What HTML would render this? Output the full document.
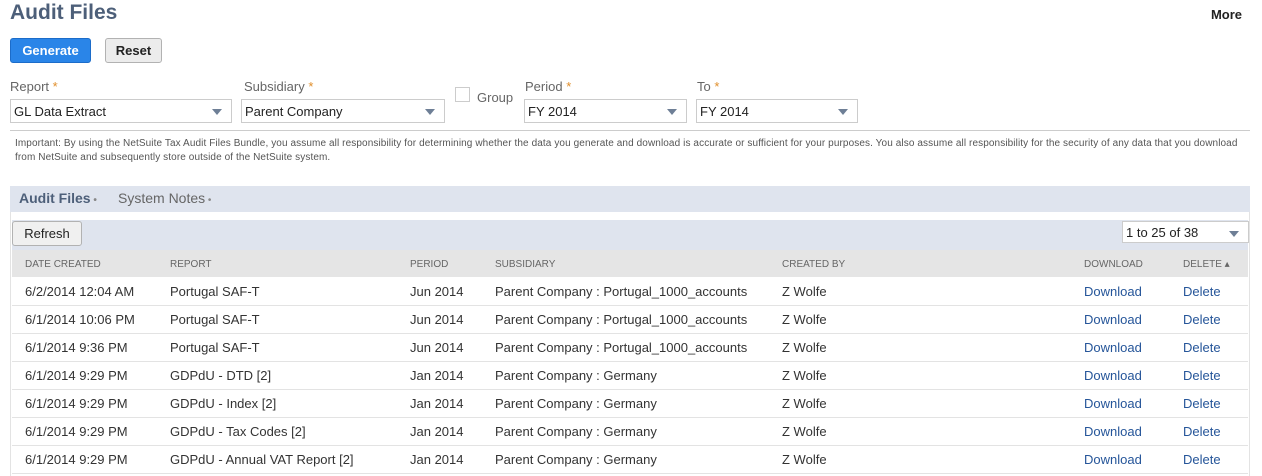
<!DOCTYPE html>
<html><head><style>
*{box-sizing:border-box;margin:0;padding:0}
body{width:1262px;height:475px;overflow:hidden;background:#fff;font-family:"Liberation Sans",Arial,sans-serif;color:#333;position:relative}
.a{position:absolute}
h1{position:absolute;left:10px;top:1px;font-size:21px;font-weight:bold;color:#4d5f79}
.more{right:20px;top:7px;font-size:13px;font-weight:bold;color:#222}
.btn{position:absolute;height:25px;border-radius:3px;font-size:13px;font-weight:bold;text-align:center;line-height:23px}
.gen{left:10px;top:38px;width:81px;background:#2a85e8;border:1px solid #1c6cc9;color:#fff}
.res{left:105px;top:38px;width:57px;background:#ececec;border:1px solid #b2b2b2;color:#222}
.lbl{font-size:13px;color:#666;top:79px}
.lbl b{color:#e08e2b;font-weight:normal}
.sel{position:absolute;top:99px;height:24px;border:1px solid #ccc;font-size:13px;color:#222;padding:4px 0 0 3px}
.sel:after{content:"";position:absolute;right:9px;top:9px;border-left:5px solid transparent;border-right:5px solid transparent;border-top:6px solid #6e7f96}
.imp{left:15px;top:137px;width:1225px;font-size:10px;letter-spacing:0.1px;line-height:14px;color:#555}
table{position:absolute;left:12px;top:250px;width:1236px;border-collapse:collapse;font-size:13px;table-layout:fixed}
th{height:27px;background:#e5e5e5;font-size:10px;font-weight:normal;color:#666;text-align:left;padding-top:2px}
td{height:28px;border-bottom:1px solid #e3e3e3;color:#333;padding-top:1px}
th:first-child,td:first-child{padding-left:13px}
td.l{color:#255599}
</style></head><body>
<h1>Audit Files</h1>
<div class="a more">More</div>
<div class="btn gen">Generate</div>
<div class="btn res">Reset</div>
<div class="a lbl" style="left:10px">Report <b>*</b></div>
<div class="a lbl" style="left:244px">Subsidiary <b>*</b></div>
<div class="a lbl" style="left:525px">Period <b>*</b></div>
<div class="a lbl" style="left:697px">To <b>*</b></div>
<div class="sel" style="left:10px;width:222px">GL Data Extract</div>
<div class="sel" style="left:241px;width:204px">Parent Company</div>
<div class="a" style="left:455px;top:87px;width:15px;height:15px;border:1px solid #ccc"></div>
<div class="a" style="left:477px;top:90px;font-size:13px;color:#666">Group</div>
<div class="sel" style="left:524px;width:163px">FY 2014</div>
<div class="sel" style="left:696px;width:162px">FY 2014</div>
<div class="a" style="left:10px;top:130px;width:1240px;height:1px;background:#ccc"></div>
<div class="a imp">Important: By using the NetSuite Tax Audit Files Bundle, you assume all responsibility for determining whether the data you generate and download is accurate or sufficient for your purposes. You also assume all responsibility for the security of any data that you download from NetSuite and subsequently store outside of the NetSuite system.</div>
<div class="a" style="left:10px;top:186px;width:1240px;height:26px;background:#dfe4ee"></div>
<div class="a" style="left:19px;top:190px;font-size:14px;font-weight:bold;color:#4d5f79">Audit Files<span style="font-size:10px;color:#888"> •</span></div>
<div class="a" style="left:118px;top:190px;font-size:14px;color:#666">System Notes<span style="font-size:10px;color:#888"> •</span></div>
<div class="a" style="left:10px;top:212px;width:1240px;height:264px;border-left:1px solid #e3e3e3;border-right:1px solid #e3e3e3"></div>
<div class="a" style="left:12px;top:220px;width:1236px;height:30px;background:#dfe4ee"></div>
<div class="btn" style="left:12px;top:221px;width:70px;background:#f0f0f0;border:1px solid #b2b2b2;font-weight:normal;color:#222">Refresh</div>
<div class="sel" style="left:1122px;top:221px;width:127px;height:22px;padding-top:3px;background:#fff">1 to 25 of 38</div>
<table>
<colgroup><col style="width:158px"><col style="width:240px"><col style="width:85px"><col style="width:287px"><col style="width:302px"><col style="width:99px"><col></colgroup>
<tr><th>DATE CREATED</th><th>REPORT</th><th>PERIOD</th><th>SUBSIDIARY</th><th>CREATED BY</th><th>DOWNLOAD</th><th>DELETE ▴</th></tr>
<tr><td>6/2/2014 12:04 AM</td><td>Portugal SAF-T</td><td>Jun 2014</td><td>Parent Company : Portugal_1000_accounts</td><td>Z Wolfe</td><td class="l">Download</td><td class="l">Delete</td></tr>
<tr><td>6/1/2014 10:06 PM</td><td>Portugal SAF-T</td><td>Jun 2014</td><td>Parent Company : Portugal_1000_accounts</td><td>Z Wolfe</td><td class="l">Download</td><td class="l">Delete</td></tr>
<tr><td>6/1/2014 9:36 PM</td><td>Portugal SAF-T</td><td>Jun 2014</td><td>Parent Company : Portugal_1000_accounts</td><td>Z Wolfe</td><td class="l">Download</td><td class="l">Delete</td></tr>
<tr><td>6/1/2014 9:29 PM</td><td>GDPdU - DTD [2]</td><td>Jan 2014</td><td>Parent Company : Germany</td><td>Z Wolfe</td><td class="l">Download</td><td class="l">Delete</td></tr>
<tr><td>6/1/2014 9:29 PM</td><td>GDPdU - Index [2]</td><td>Jan 2014</td><td>Parent Company : Germany</td><td>Z Wolfe</td><td class="l">Download</td><td class="l">Delete</td></tr>
<tr><td>6/1/2014 9:29 PM</td><td>GDPdU - Tax Codes [2]</td><td>Jan 2014</td><td>Parent Company : Germany</td><td>Z Wolfe</td><td class="l">Download</td><td class="l">Delete</td></tr>
<tr><td>6/1/2014 9:29 PM</td><td>GDPdU - Annual VAT Report [2]</td><td>Jan 2014</td><td>Parent Company : Germany</td><td>Z Wolfe</td><td class="l">Download</td><td class="l">Delete</td></tr>
</table>
</body></html>
